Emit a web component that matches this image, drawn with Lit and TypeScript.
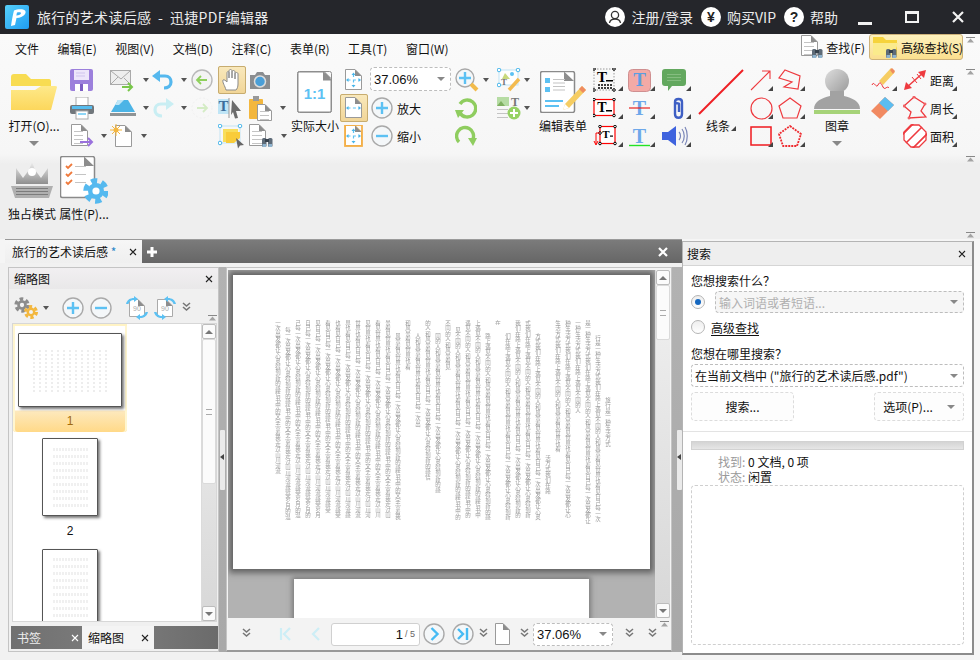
import { LitElement, html, css, svg, nothing } from "lit";
import { customElement } from "lit/decorators.js";

const ic = (w: number, h: number, body: unknown) =>
  html`<svg width=${w} height=${h} viewBox="0 0 ${w} ${h}" style="display:block;flex:none">${body}</svg>`;

const page = (x: number, y: number, w: number, h: number, fill = "#fff", st = "#9a9a9a") => svg`
  <path d="M${x + .5} ${y + .5}H${x + w - 7}L${x + w - .5} ${y + 7}V${y + h - .5}H${x + .5}Z" fill=${fill} stroke=${st}/>
  <path d="M${x + w - 7} ${y + .5}L${x + w - .5} ${y + 7}H${x + w - 7}Z" fill="#8d8d8d"/>`;
const lines = (x: number, y: number, w: number, n: number, step = 4, c = "#c4c4c4") =>
  Array.from({ length: n }, (_, i) => svg`<rect x=${x} y=${y + i * step} width=${w} height="1" fill=${c}/>`);
const binoc = (x: number, y: number) => svg`
  <rect x=${x} y=${y} width="4.5" height="9" rx="1.5" fill="#5e6b78"/><rect x=${x + 6} y=${y} width="4.5" height="9" rx="1.5" fill="#5e6b78"/>
  <rect x=${x + 3} y=${y + 1} width="4" height="3" fill="#36414c"/><rect x=${x + .5} y=${y + 6} width="3.5" height="3" fill="#8fb4cf"/><rect x=${x + 6.5} y=${y + 6} width="3.5" height="3" fill="#8fb4cf"/>`;
const gear = (cx: number, cy: number, r: number, c: string, hole = "#fff") => svg`
  <circle cx=${cx} cy=${cy} r=${r} fill="none" stroke=${c} stroke-width=${r * .55} stroke-dasharray=${`${r * .6} ${r * .45}`}/>
  <circle cx=${cx} cy=${cy} r=${r * .8} fill=${c}/><circle cx=${cx} cy=${cy} r=${r * .36} fill=${hole}/>`;
const circBtn = (inner: unknown, s = 22) => ic(s, s, svg`
  <circle cx=${s / 2} cy=${s / 2} r=${s / 2 - 1} fill="#f4f7f9" stroke="#a9a9a9" stroke-width="1.4"/>${inner}`);
const plus = circBtn(svg`<path d="M11 5v12M5 11h12" stroke="#5cc1f3" stroke-width="2.4"/>`);
const minus = circBtn(svg`<path d="M5 11h12" stroke="#5cc1f3" stroke-width="2.4"/>`);
const dots = (x: number, y: number, w: number, h: number) => svg`
  <rect x=${x} y=${y} width=${w} height=${h} fill="none" stroke="#9a9a9a" stroke-width="1" stroke-dasharray="1.5 1.5"/>`;
const handles = (pts: number[][], c = "#49b6ea", f = "#fff", r = 1.8) =>
  pts.map(([x, y]) => svg`<circle cx=${x} cy=${y} r=${r} fill=${f} stroke=${c} stroke-width="1"/>`);
const crossArrows = svg`<path d="M11 8v12M5 14h12" stroke="#5cc1f3" stroke-width="1.2" stroke-dasharray="3 2.4"/>
  <path d="M9 9l2-2.5L13 9zM9 19l2 2.5 2-2.5zM6 12l-2.5 2L6 16zM16 12l2.5 2L16 16z" fill="#49b6ea"/>`;
const tLetter = (x: number, y: number, s: number, c: string) =>
  svg`<text x=${x} y=${y} font-family="Liberation Serif" font-weight="700" font-size=${s} fill=${c} text-anchor="middle">T</text>`;
const dbl = ic(9, 12, svg`<path d="M1 1l3.5 3L8 1M1 5l3.5 3L8 5" fill="none" stroke="#777" stroke-width="1.6"/>`);
const rot90 = (flip: boolean) => ic(24, 24, svg`
  ${page(4, 3, 16, 18, "#fff", "#aaa")}
  <text x="12" y="15" font-family="Liberation Sans" font-size="7" fill="#aaa" text-anchor="middle">90</text>
  <g transform=${flip ? "translate(24 0) scale(-1 1)" : ""}>
  <path d="M1 8C2 4 5 2 9 2V0l4 3-4 3V4C6 4 4 6 3.500 8Z" fill="#5cc1f3"/>
  <path d="M23 16c-1 4-4 6-8 6v2l-4-3 4-3v2c3 0 5-2 5.500-4Z" fill="#5cc1f3"/></g>`);

const I = {
  logo: ic(24, 24, svg`<defs><linearGradient id="lg" x1="0" y1="0" x2="1" y2="1"><stop offset="0" stop-color="#56d0fb"/><stop offset="1" stop-color="#1f9cf2"/></linearGradient></defs>
    <rect width="24" height="24" rx="2" fill="url(#lg)"/>
    <path d="M6 21C7 14 8 9 9 5.500 12 4 18 3.500 20 5.500 22 8 19 12.500 11.500 13L10 20Z" fill="#fff"/><path d="M12 7.500 11.300 10.500C14 10.500 16 9.500 16 8 16 7 14 7 12 7.500Z" fill="#37aef6"/>`),
  folder: ic(46, 36, svg`<defs><linearGradient id="fo" x1="0" y1="0" x2="0" y2="1"><stop offset="0" stop-color="#fee98a"/><stop offset="1" stop-color="#fcd75c"/></linearGradient></defs>
    <path d="M0 3Q0 0 3 0H15L20 5H38Q40 5 40 8V12H0Z" fill="#f8dc52"/><path d="M0 36Q0 36 3 36H40L46 13Q46 12 44 12H30L24 16H0Z" fill="url(#fo)"/>`),
  save: ic(23, 22, svg`<rect width="23" height="22" rx="2" fill="#9c80dc"/><rect x="4" y="1" width="15" height="10" fill="#ece6fa"/><path d="M6 4h9M6 7h9" stroke="#cfc4ee"/><rect x="5" y="15" width="13" height="7" fill="#fff"/><rect x="10" y="15" width="3" height="7" fill="#7d5fc4"/>`),
  print: ic(24, 23, svg`<rect x="6" y="0" width="12" height="9" fill="#fff" stroke="#aaa"/><rect x="0" y="8" width="24" height="9" rx="2" fill="#71777c"/><rect x="2" y="9" width="20" height="3" fill="#56bcee"/><rect x="6" y="14" width="12" height="8" fill="#fff" stroke="#aaa"/><rect x="8" y="16" width="8" height="2" fill="#8fd6f6"/>`),
  mail: ic(26, 23, svg`<rect x=".5" y="1.500" width="20" height="14" fill="#eee" stroke="#aaa"/><path d="M1 2l10 8 9-8M1 15l7-7M20 15l-6-6" fill="none" stroke="#aaa"/><path d="M12 18h9M18 14l4 4-4 4" fill="none" stroke="#79c74a" stroke-width="2"/>`),
  hat: ic(26, 18, svg`<path d="M8 1H18L25 13H1Z" fill="#4cb4e6"/><path d="M8 1h6l-5 5H5z" fill="#bde6f8"/><rect x="0" y="14" width="26" height="3" fill="#8f9496"/>`),
  exp: ic(24, 24, svg`${page(1, 0, 17, 22, "#fff", "#9a9a9a")}${lines(4, 7, 9, 4)}<path d="M10 18h11M18 14l4 4-4 4" fill="none" stroke="#9a71dd" stroke-width="2"/>`),
  nw: ic(24, 24, svg`${page(5, 1, 17, 22, "#fff", "#9a9a9a")}<circle cx="6" cy="6" r="2.500" fill="#f4b63f"/><path d="M6 0v12M0 6h12M2 2l8 8M10 2l-8 8" stroke="#f4b63f"/>`),
  undo: ic(22, 20, svg`<path d="M7 6H13C17 6 19 9 19 12 19 16 16 18 12 18" fill="none" stroke="#55b8ee" stroke-width="3.200"/><path d="M8 0V12L0 6Z" fill="#55b8ee"/>`),
  redo: ic(22, 20, svg`<path d="M15 6H9C5 6 3 9 3 12 3 16 6 18 10 18" fill="none" stroke="#c9eef3" stroke-width="3.200"/><path d="M14 0V12L22 6Z" fill="#c9eef3"/>`),
  back: ic(22, 22, svg`<circle cx="11" cy="11" r="10" fill="#f3f3f3" stroke="#b9b9b9" stroke-width="1.400"/><path d="M6 11h10M10 7l-4 4 4 4" fill="none" stroke="#8ed05c" stroke-width="1.800"/>`),
  fwd: ic(22, 22, svg`<circle cx="11" cy="11" r="10" fill="none" stroke="#f1f1f1" stroke-dasharray="2 2"/><path d="M6 11h10M12 7l4 4-4 4" fill="none" stroke="#d4ecc5" stroke-width="1.800"/>`),
  hand: ic(20, 22, svg`<path d="M4 21C3 17 0 13 1 11 2 10 4 12 5 13V4C5 2 7 2 7 4V9 2C7 0 10 0 10 2V9 3C10 1 13 1 13 3V10 5C13 3 16 3 16 5V15C16 18 15 20 14 21Z" fill="#fff" stroke="#8a8a8a" stroke-width="1"/>`),
  cam: ic(22, 17, svg`<path d="M1 3H6L8 0H14L16 3H21V17H1Z" fill="#8a8d90"/><circle cx="11" cy="9.500" r="5.500" fill="#4a9fd8" stroke="#dcdcdc" stroke-width="1.500"/>`),
  tsel: ic(25, 24, svg`<rect x="0" y="3" width="11" height="15" fill="#bfe5f6"/>${tLetter(5.500, 15, 15, "#3c6e9a")}<path d="M11 2v20" stroke="#999"/><path d="M14 4l9 11-5 0 2 7-3 .5-2-6.500L13 19Z" fill="#6c6c6c"/>`),
  clip: ic(24, 25, svg`<rect x="0" y="3" width="14" height="20" rx="1" fill="#f3b73e"/><rect x="4" y="0" width="6" height="5" fill="#999"/>${page(8, 8, 15, 17)}${lines(11, 15, 9, 3)}`),
  note: ic(27, 25, svg`<rect x="2" y="2" width="20" height="17" fill="none" stroke="#c3e4f3"/><path d="M5 5H20V13L14 18H5Z" fill="#f8de5c"/><path d="M8 8H22V14L16 19H8Z" fill="#f9cc3a"/>${handles([[2, 2], [22, 2], [2, 19]])}<path d="M18 14l8 7-4 .5-2 3Z" fill="#666"/>`),
  srch: ic(25, 24, svg`${page(0, 0, 17, 22)}${lines(3, 7, 10, 4)}${binoc(13, 14)}`),
  actual: ic(36, 42, svg`${page(.5, .5, 34, 41, "#fff", "#8e8e8e")}<rect x=".5" y=".5" width="34" height="41" rx="2" fill="none" stroke="#8e8e8e"/><path d="M26 .5 35 9.500H26Z" fill="#8d8d8d"/><text x="17.500" y="28" font-family="Liberation Sans" font-weight="700" font-size="15" fill="#5cc1f3" text-anchor="middle">1:1</text>`),
  fit1: ic(20, 22, svg`${page(1, 0, 17, 21)}<g transform="translate(-1.500 -3)">${crossArrows}</g>`),
  fit2: ic(20, 22, svg`${page(1, 0, 17, 21)}<g transform="translate(-1.500 -3)"><path d="M5 14h12" stroke="#5cc1f3" stroke-width="1.200" stroke-dasharray="3 2.400"/><path d="M6 12l-2.500 2L6 16zM16 12l2.500 2L16 16z" fill="#49b6ea"/></g>`),
  fit3: ic(20, 22, svg`${page(1, 0, 17, 21, "#fff", "#f0ab3e")}<rect x="1" y="0" width="17" height="21" fill="none" stroke="#f3b04a" stroke-width="1.800"/><g transform="translate(-1.500 -3)">${crossArrows}</g>`),
  mag: ic(24, 24, svg`<circle cx="10" cy="10" r="9" fill="#f4f7f9" stroke="#a9a9a9" stroke-width="1.400"/><path d="M10 4v12M4 10h12" stroke="#5cc1f3" stroke-width="2.400"/><path d="M16 16l6 6" stroke="#f2bb4b" stroke-width="4"/>`),
  ccw: ic(22, 22, svg`<path d="M5 7A8.500 8.500 0 1 1 5 16" fill="none" stroke="#8fcd5f" stroke-width="3.400"/><path d="M0 13H9L3 21Z" fill="#8fcd5f"/>`),
  cw: ic(22, 22, svg`<path d="M4 17A8.500 8.500 0 1 1 18 14" fill="none" stroke="#8fcd5f" stroke-width="3.400"/><path d="M13 13H22L18 21Z" fill="#8fcd5f"/>`),
  ed1: ic(24, 24, svg`<rect x="2" y="2" width="19" height="15" fill="#fff" stroke="#bfe4f5"/><path d="M8 5l5 6H5Z" fill="#c9d97d"/><circle cx="15" cy="6" r="2" fill="#5cc1f3"/>${tLetter(7, 17, 9, "#777")}<path d="M12 22L22 11" stroke="#f3bb50" stroke-width="3.500"/>${handles([[2, 2], [21, 2], [2, 17]])}`),
  ed2: ic(24, 24, svg`<rect x="0" y="1" width="12" height="9" fill="#b6dca4"/><path d="M0 10l4-5 4 5Z" fill="#7fb061"/>${tLetter(18, 10, 12, "#777")}${lines(0, 13, 11, 3)}<circle cx="17" cy="17" r="6.500" fill="#96d264"/><path d="M17 13v8M13 17h8" stroke="#fff" stroke-width="2"/>`),
  form: ic(46, 42, svg`<rect x=".5" y=".5" width="34" height="41" rx="2" fill="#fff" stroke="#8a8a8a" stroke-width="1.500"/><path d="M24 .5 34 10H24Z" fill="#8d8d8d"/>
    <rect x="5" y="7" width="5" height="5" fill="#5cc1f3"/><rect x="5" y="16" width="5" height="5" fill="#5cc1f3"/><rect x="5" y="29" width="18" height="2" fill="#5cc1f3"/><rect x="5" y="34" width="14" height="2" fill="#5cc1f3"/>${lines(13, 8, 12, 4, 3.500)}
    <path d="M25 33 42 15 46 19 29 37 23 39Z" fill="#f6cd62"/><path d="M39 18 42 15 46 19 43 22Z" fill="#ef8b60"/><path d="M23 39l2-6 4 4Z" fill="#fff"/>`),
  tb1: ic(23, 24, svg`${dots(1, 1, 20, 21)}${tLetter(9, 14, 15, "#000")}<rect x="13" y="12" width="7" height="1.500" fill="#000"/><path d="M5 17h14M5 20h14" stroke="#000" stroke-width="1.300" stroke-dasharray="2 1"/>${handles([[1, 1], [21, 1], [1, 22], [21, 22]], "#000", "#fff", 1.300)}`),
  tb2: ic(23, 20, svg`<rect x="1" y="1.500" width="20" height="16" fill="#fff" stroke="#f00" stroke-width="1.200"/>${tLetter(9, 14, 14, "#000")}<rect x="13" y="12" width="6" height="1.500" fill="#000"/>${handles([[1, 1.500], [21, 1.500], [1, 17.500], [21, 17.500]], "#000", "#fff", 1.300)}`),
  tb3: ic(24, 22, svg`<rect x="7" y="1.500" width="15" height="17" fill="#fff" stroke="#f00" stroke-width="1.200"/>${tLetter(13, 13, 11, "#000")}<rect x="17" y="10.500" width="3" height="1.200" fill="#000"/>${handles([[7, 1.500], [22, 1.500], [7, 18.500], [22, 18.500], [7, 8]], "#000", "#fff", 1.300)}<path d="M7 8H3V19M1 16l2 4 2-4" fill="none" stroke="#f00" stroke-width="1"/>`),
  t1: ic(23, 23, svg`<rect x=".5" y=".5" width="22" height="22" rx="4" fill="#f3aaa6" stroke="#cf8f90"/>${tLetter(11.500, 17, 19, "#5d9ee0")}`),
  t2: ic(23, 24, svg`${tLetter(11.500, 19, 20, "#6ea8ea")}<path d="M1 12h21" stroke="#e8211d" stroke-width="1.200"/>`),
  t3: ic(23, 24, svg`${tLetter(11.500, 19, 20, "#6ea8ea")}<path d="M1 21.500h21" stroke="#24e324" stroke-width="1.400"/>`),
  cmt: ic(24, 22, svg`<path d="M3 0H21Q24 0 24 3V14Q24 17 21 17H10L6 22 6 17H3Q0 17 0 14V3Q0 0 3 0Z" fill="#63a85f"/>${lines(5, 5, 14, 3, 3, "#85bd80")}`),
  pin: ic(13, 24, svg`<path d="M3 16V6C3 2 10 2 10 6V18C10 23 3 23 3 18V8C3 7 7 7 7 8V16" fill="none" stroke="#3e5fc4" stroke-width="2.400"/>`),
  spk: ic(26, 24, svg`<path d="M0 8H6L14 2V22L6 16H0Z" fill="#3f63de"/><path d="M17 8C19 10 19 14 17 16M20 5C23 9 23 15 20 19M23 3C26 8 26 16 23 21" fill="none" stroke="#7a86b8" stroke-width="1.200"/>`),
  line: ic(46, 46, svg`<path d="M1 45L45 1" stroke="#ef1f24" stroke-width="2"/>`),
  arrow: ic(22, 22, svg`<path d="M1 21L20 2M12 2h8v8" fill="none" stroke="#ee3a3f" stroke-width="1.100"/>`),
  ell: ic(23, 23, svg`<circle cx="11.500" cy="11.500" r="10.500" fill="none" stroke="#ee3a3f" stroke-width="1.200"/>`),
  rct: ic(22, 20, svg`<rect x="1" y="1" width="20" height="18" fill="none" stroke="#f01a1f" stroke-width="1.500"/>`),
  poly: ic(23, 22, svg`<path d="M7 1L22 7 20 20 6 18 14 13 1 9Z" fill="none" stroke="#ee3a3f" stroke-width="1.200"/>`),
  pent: ic(24, 22, svg`<path d="M12 1L23 9 19 21H5L1 9Z" fill="none" stroke="#ee3a3f" stroke-width="1.200"/>`),
  cloud: ic(24, 22, svg`<path d="M12 1L23 9 19 21H5L1 9Z" fill="none" stroke="#ee2a2f" stroke-width="1.800" stroke-dasharray="2 1" stroke-linejoin="round"/>`),
  stamp: ic(46, 46, svg`<defs><linearGradient id="st" x1="0" y1="0" x2="1" y2="1"><stop offset="0" stop-color="#dedede"/><stop offset="1" stop-color="#9a9a9a"/></linearGradient></defs>
    <circle cx="23" cy="12" r="12" fill="url(#st)"/><path d="M0 40C0 32 8 29 16 27V22H30V27C38 29 46 32 46 40Z" fill="#a2a2a2"/><rect x="0" y="41" width="46" height="4" fill="#a6d378"/>`),
  pen: ic(24, 26, svg`<path d="M8 14 20 1 24 5 12 18Z" fill="#f6cd62"/><path d="M19 3l2-2 3 3-2 3Z" fill="#ef8b60"/><path d="M1 18C3 13 5 22 7 18S10 16 12 20 16 18 18 21" fill="none" stroke="#ee2a2f" stroke-width="1"/>`),
  erase: ic(23, 22, svg`<path d="M0 14 14 0 23 8 9 22Z" fill="#f18a62"/><path d="M8 6 14 0 23 8 17 14Z" fill="#5cbdf0"/>`),
  dist: ic(24, 22, svg`<path d="M3 19L21 3" stroke="#ee3a3f" stroke-width="1.500"/><path d="M1 21l2-8 6 6ZM23 1l-2 8-6-6Z" fill="#ee3a3f"/><path d="M9 8l5 6M14 5l4 5" stroke="#ee3a3f"/>`),
  peri: ic(24, 24, svg`<path d="M11 1 22 8 18 15 23 21 6 22 8 16 1 10Z" fill="none" stroke="#ee3a3f" stroke-width="1.300"/>${handles([[11, 1], [22, 8], [1, 10], [6, 22]], "#ee3a3f", "#fff", 1)}`),
  area: ic(24, 24, svg`<defs><clipPath id="ar"><path d="M8 0H16L24 8V16L16 24H8L0 16V8Z"/></clipPath></defs><path d="M8 1H16L23 8V16L16 23H8L1 16V8Z" fill="#fff" stroke="#ee3a3f" stroke-width="1.300"/><g clip-path="url(#ar)"><path d="M-2 12L12-2M2 20L20 2M8 26L26 8" stroke="#ee3a3f" stroke-width="1.600"/></g>`),
  crown: ic(42, 40, svg`<defs><linearGradient id="cr" x1="0" y1="0" x2="0" y2="1"><stop offset="0" stop-color="#efefef"/><stop offset="1" stop-color="#8e8e8e"/></linearGradient></defs>
    <path d="M5 8 12 18 18 10 21 2 24 10 30 18 37 8 37 24H5Z" fill="url(#cr)"/><circle cx="21" cy="12" r="4" fill="#fff"/><path d="M0 26H42L38 38H4Z" fill="#b0b0b0"/>${lines(5, 28, 32, 3, 3, "#7c7c7c")}`),
  prop: ic(48, 48, svg`<rect x=".5" y=".5" width="34" height="41" rx="2" fill="#fff" stroke="#8a8a8a" stroke-width="1.500"/><path d="M24 .5 34 10H24Z" fill="#8d8d8d"/>
    <path d="M6 10l2 2 4-4M6 18l2 2 4-4M6 26l2 2 4-4" fill="none" stroke="#ef7a3c" stroke-width="1.800"/>${lines(15, 10, 11, 3, 8)}${gear(36, 35, 10, "#55b9ef")}`),
  find: ic(24, 24, svg`${page(1, 0, 17, 21)}${lines(4, 7, 10, 4)}${binoc(12, 14)}`),
  adv: ic(26, 24, svg`<path d="M0 2H10L13 5H24V20H0Z" fill="#f6d33c"/><path d="M0 8H25L21 20H0Z" fill="#fbeb8c"/>${binoc(13, 14)}`),
  gears: ic(24, 22, svg`${gear(8, 8, 6, "#8c8c8c", "#f3f3f3")}${gear(17, 15, 5.500, "#f3b73e", "#f3f3f3")}`),
  rl: rot90(false), rr: rot90(true),
  doc: ic(15, 22, svg`${page(0, 0, 15, 22)}`),
  first: ic(14, 14, svg`<path d="M2 1v12M11 1 5 7l6 6" fill="none" stroke="#cdeef6" stroke-width="2.200"/>`),
  prev: ic(10, 14, svg`<path d="M8 1 2 7l6 6" fill="none" stroke="#cdeef6" stroke-width="2.200"/>`),
  next: circBtn(svg`<path d="M8.500 5l6 6-6 6" fill="none" stroke="#46bbf4" stroke-width="2.400"/>`),
  last: circBtn(svg`<path d="M6 6l5 5-5 5" fill="none" stroke="#46bbf4" stroke-width="2.400"/><path d="M15 5v12" stroke="#46bbf4" stroke-width="2.400"/>`),
  user: ic(20, 20, svg`<circle cx="10" cy="10" r="10" fill="#fff"/><circle cx="10" cy="8" r="3.600" fill="none" stroke="#333" stroke-width="1.300"/><path d="M4.500 16C5 13 7 12 10 12S15 13 15.500 16" fill="none" stroke="#333" stroke-width="1.300"/>`),
  x: ic(8, 8, svg`<path d="M1 1l6 6M7 1L1 7" stroke="#222" stroke-width="1.100"/>`),
  xw: ic(8, 8, svg`<path d="M1 1l6 6M7 1L1 7" stroke="#fff" stroke-width="1.100"/>`),
  xb: ic(10, 10, svg`<path d="M1 1l8 8M9 1L1 9" stroke="#fff" stroke-width="2.200"/>`),
  xl: ic(12, 12, svg`<path d="M1 1l10 10M11 1L1 11" stroke="#f2f2f2" stroke-width="2.200"/>`),
  add: ic(10, 10, svg`<path d="M5 0v10M0 5h10" stroke="#fff" stroke-width="3"/>`),
  mark: ic(9, 6, svg`<path d="M0 .5h9" stroke="#888"/><path d="M4.500 1.500l3.500 4H1z" fill="#a3a3a3"/>`),
};

const arrow = html`<i class="ar"></i>`;
const cell = (icon: unknown, opts: { a?: boolean; c?: boolean; cls?: string; t?: string } = {}) => html`
  <div class="cell ${opts.cls ?? ""}">${icon}${opts.t ? html`<span>${opts.t}</span>` : nothing}${opts.a ? arrow : nothing}${opts.c ? html`<i class="cor"></i>` : nothing}</div>`;
const col = (cls: string, ...cells: unknown[]) => html`<div class="col ${cls}">${cells}</div>`;
const big = (icon: unknown, label: string, drop = false, corner = false) => html`
  <div class="big"><div class="bi">${icon}</div><div class="bl">${label}${corner ? html`<i class="cor2"></i>` : nothing}</div>${drop ? html`<i class="ar dn"></i>` : nothing}</div>`;

const TEXT = "旅行是一种生活方式我们在路上遇见不同的人和风景看见世界也看见自己每一次出发都让心灵得到新的感悟书中的文字带着我走过山川河流感受岁月的温度与人间的烟火艺术让平凡的日子有了光彩也让远方变得更加清晰而动人";
const COLS: [number, number][] = [
  [395, 555], [210, 775], [165, 780], [165, 455], [165, 775], [165, 570], [570, 690], [205, 770], [165, 770], [165, 770], [205, 770], [165, 180],
  [205, 770], [165, 770], [165, 770], [185, 770], [165, 320], [205, 690], [165, 650], [205, 500], [165, 320], [205, 770], [165, 770], [165, 770],
  [165, 760], [165, 770], [165, 770], [165, 770], [165, 750], [165, 770], [165, 770], [165, 770], [185, 770], [165, 640],
];

@customElement("app-root")
export class AppRoot extends LitElement {
  static styles = css`
    :host { display: block; width: 980px; height: 660px; overflow: hidden; font-family: "Noto Sans CJK SC", "Liberation Sans", sans-serif; font-size: 12px; color: #111; }
    .win { width: 980px; height: 660px; display: flex; flex-direction: column; background: #f5f5f5; }
    .title { height: 34px; flex: none; background: #25262b; display: flex; align-items: center; color: #ececec; padding-left: 5px; box-sizing: border-box; }
    .title .name { margin-left: 8px; font-size: 14px; letter-spacing: .02em; flex: 1; white-space: pre; }
    .tb { display: flex; align-items: center; gap: 6px; font-size: 14px; margin-right: 8px; white-space: nowrap; }
    .tb b { width: 20px; height: 20px; border-radius: 50%; background: #fff; color: #222; font: 700 14px/20px "Liberation Sans", sans-serif; text-align: center; }
    .wc { display: flex; align-items: center; width: 142px; padding-left: 20px; box-sizing: border-box; gap: 33px; margin-left: -8px; flex: none; }
    .wc .mn { width: 14px; height: 3px; background: #f2f2f2; margin-top: 13px; }
    .wc .mx { width: 10px; height: 7px; border: 2px solid #f2f2f2; border-top-width: 3px; }
    .ribbon { height: 205px; flex: none; position: relative; background: linear-gradient(#fafafa 0, #f6f6f6 120px, #eeeeee 130px); box-sizing: border-box; }
    .menu { height: 32px; display: flex; align-items: center; padding: 0 0 4px 15px; box-sizing: border-box; gap: 18.500px; }
    .find { margin-left: auto; display: flex; align-items: center; padding-right: 17px; }
    .find div { display: flex; align-items: center; height: 26px; margin-top: -2px; white-space: nowrap; }
    .find .f1 { gap: 2px; margin-right: 4px; }
    .find .f2 { background: linear-gradient(#fdf1bd, #fbdf8e); border: 1px solid #cdb27a; border-radius: 3px; padding: 0 3px; box-sizing: border-box; width: 94px; gap: 2px; letter-spacing: -.2px; }
    .tools { display: grid; padding-left: 8px; grid-template-rows: 84px; grid-template-columns: 62px 40px 42px 39px 27px 31px 41px 50px 28px 84px 43px 40px 56px 35px 32px 36px 54px 28px 32px 58px 34px 60px; }
    .tools > .big:first-child { width: 52px; }
    .col { display: flex; flex-direction: column; }
    .p2 { padding-left: 2px; } .p3 { padding-left: 3px; } .p4 { padding-left: 4px; } .p5 { padding-left: 5px; }
    .cell { height: 28px; display: flex; align-items: center; gap: 7px; position: relative; white-space: nowrap; }
    .cell.ct { justify-content: center; }
    .cell.sel { width: 28px; background: linear-gradient(#f9e9bd, #f1d597); outline: 1px solid #c7ac6f; outline-offset: -1px; border-radius: 2px; justify-content: center; }
    .cell.sm { width: 28px; }
    .cell.lb3 { gap: 3px; }
    .ar { display: block; width: 0; height: 0; border: 3px solid transparent; border-top: 4px solid #555; border-bottom: 0; flex: none; }
    .ar.dn { border-width: 5px 5px 0; margin-top: 7px; border-top-color: #888; }
    .cor, .cor2 { position: absolute; right: 3px; bottom: 3px; width: 0; height: 0; border-style: solid; border-width: 0 0 5px 5px; border-color: transparent transparent #444 transparent; }
    .cor2 { position: static; display: inline-block; margin-left: 1px; }
    .big { display: flex; flex-direction: column; align-items: center; }
    .bi { height: 52px; display: flex; align-items: center; justify-content: center; }
    .bl { line-height: 16px; white-space: nowrap; }
    .combo { display: flex; align-items: center; justify-content: space-between; box-sizing: border-box; background: #fff; border: 1px dashed #bdbdbd; border-radius: 4px; padding: 0 5px 0 3px; white-space: nowrap; }
    .combo .ar { border-width: 4px 4px 0; border-top-color: #888; }
    .z { width: 81px; height: 24px; margin: 1px 0 3px 2px; font: 13px "Liberation Sans", sans-serif; }
    .zr { gap: 4px; padding-left: 3px; }
    .t2 { display: flex; padding: 0 0 0 8px; margin-top: 6px; gap: 4px; }
    .t2 .big { width: 48px; }
    .t2 .bi { height: 48px; }
    .t2 .bl { margin-top: 2px; }
    .rail { position: absolute; right: 5px; top: 0; bottom: 0; width: 9px; }
    .rail span { position: absolute; left: 0; }
    .m1 { top: 3px; } .m2 { top: 35px; } .m3 { top: 122px; } .m4 { top: 198px; }
    .work { flex: 1; display: flex; min-height: 0; }
    .main { width: 682px; flex: none; display: flex; flex-direction: column; }
    .tabs { height: 24px; flex: none; background: linear-gradient(#7b7b7b, #666); border-top: 1px solid #9a9a9a; box-sizing: border-box; display: flex; align-items: center; margin-left: 5px; padding-right: 14px; }
    .tab { height: 23px; width: 137px; background: linear-gradient(#f6f6f6, #efefef); display: flex; align-items: center; justify-content: space-between; padding: 0 5px 0 7px; box-sizing: border-box; margin-right: 5px; }
    .tab em { font-style: normal; color: #2a86c8; }
    .sp { flex: 1; }
    .panes { flex: 1; display: flex; min-height: 0; padding: 4px 0 8px 8px; background: #f1f1f1; }
    .thumbs { width: 211px; flex: none; display: flex; flex-direction: column; background: #f0f0f0; border: 1px solid #c4c4c4; box-sizing: border-box; }
    .ph { height: 21px; flex: none; display: flex; align-items: center; justify-content: space-between; padding: 0 5px; background: linear-gradient(#f1eff1, #e9e8e9); }
    .tbar { height: 34px; flex: none; display: flex; align-items: center; padding: 3px 0 0 5px; box-sizing: border-box; }
    .tbar .ar { margin: 0 0 0 5px; }
    .tbar .ar + svg { margin-left: 13px; }
    .tbar > svg:nth-of-type(3) { margin-left: 6px; }
    .tbar > svg:nth-of-type(4) { margin-left: 13px; }
    .tbar > svg:nth-of-type(5) { margin-left: 4px; }
    .tbar > svg:nth-of-type(6) { margin-left: 5px; }
    .tbar .mk { margin: 20px 1px 0 auto; }
    .list { flex: 1; display: flex; min-height: 0; margin: 0 1px 0 3px; background: #fff; border: 1px solid #d7d7d7; box-sizing: border-box; position: relative; }
    .lb { flex: 1; overflow: hidden; display: flex; flex-direction: column; align-items: flex-start; }
    .item { width: 114px; display: flex; flex-direction: column; align-items: center; }
    .item.on { background: linear-gradient(#fff 0, #fff 86px, #fde9bd 87px, #ffd988 100%); border-radius: 0 0 3px 3px; box-shadow: inset 0 2px 0 #fff3c4, inset 2px 0 0 #fff6d0, inset -2px 0 0 #fff6d0; height: 108px; padding-top: 9px; box-sizing: border-box; }
    .item label { font: 12px/14px "Liberation Sans", sans-serif; margin-top: 8px; }
    .item.on label { color: #a06a10; margin-top: 7px; }
    .tp { background: #fff; border: 1px solid #555; border-radius: 1px; box-shadow: 2px 2px 3px #777; box-sizing: border-box; display: flex; flex: none; }
    .tp.l { width: 104px; height: 74px; padding: 15px 14px 12px; }
    .tp.p { width: 56px; height: 78px; margin-top: 6px; padding: 8px 9px; }
    .tp.c { height: 84px; margin-top: 11px; margin-bottom: -20px; }
    .tp div { flex: 1; }
    .tp.l div { background: repeating-linear-gradient(0deg, #fff 0 2px, transparent 2px 4px), repeating-linear-gradient(90deg, #ededed 0 2px, transparent 2px 6px); }
    .tp.p div { background: repeating-linear-gradient(90deg, #fff 0 1px, transparent 1px 3px), repeating-linear-gradient(0deg, #f0f0f0 0 3px, transparent 3px 7px); }
    .sb { width: 15px; flex: none; display: flex; flex-direction: column; background: linear-gradient(#f1f1f1, #d7d7d7); border-left: 1px solid #dbdbdb; box-sizing: border-box; }
    .sb .btn { height: 15px; flex: none; background: #fbfbfb; border: 1px solid #bcbcbc; border-radius: 2px; box-sizing: border-box; display: flex; align-items: center; justify-content: center; }
    .sb .btn i { width: 0; height: 0; border: 4px solid transparent; border-top: 0; border-bottom: 4px solid #777; }
    .sb .btn.dn i { border-bottom: 0; border-top: 4px solid #777; }
    .sb .th { flex: none; background: #fbfbfb; border: 1px solid #dadada; border-radius: 2px; display: flex; align-items: center; justify-content: center; box-sizing: border-box; }
    .sb .th::after { content: ""; width: 6px; height: 4px; border-top: 1px solid #aaa; border-bottom: 1px solid #aaa; }
    .sb .gr { flex: 1; }
    .btabs { height: 23px; flex: none; margin: 4px 0 2px 2px; background: linear-gradient(90deg,#707070,#7d7d7d 50%,#6b6b6b); display: flex; }
    .bt { width: 71px; display: flex; align-items: center; justify-content: space-between; box-sizing: border-box; padding: 0 3px 0 6px; color: #eee; font-size: 12px; }
    .bt.on { width: 72px; background: #f4f4f4; color: #111; padding-right: 5px; }
    .split { width: 7px; flex: none; background: linear-gradient(#b2b2b2,#a8a8a8); display: flex; align-items: center; justify-content: center; position: relative; }
    .split::after { content: ""; width: 5px; height: 60px; background: #eaeaea; border-radius: 1px; }
    .split i { position: absolute; left: 1px; top: 187px; width: 0; height: 0; border: 3px solid transparent; border-left: 0; border-right: 4px solid #444; z-index: 1; }
    .doc { width: 446px; flex: none; display: flex; flex-direction: column; background: #f3f3f3; border: 1px solid #c4c4c4; border-bottom-width: 2px; border-bottom-color: #999; box-sizing: border-box; }
    .vr { flex: 1; display: flex; min-height: 0; padding: 2px 3px 0 1px; }
    .view { width: 427px; flex: none; background: #b2b2b2; display: flex; flex-direction: column; align-items: center; overflow: hidden; gap: 10px; padding-top: 5px; box-sizing: border-box; }
    .pg { flex: none; background: #fff; box-sizing: border-box; }
    .pg.a { width: 417px; height: 294px; box-shadow: 0 0 6px 4px #636363; padding: 45px 0 0 40px; }
    .pg.b { width: 295px; height: 60px; box-shadow: 0 0 5px 2px #7c7c7c; }
    .txt { display: flex; flex-direction: row-reverse; width: 340px; justify-content: flex-start; filter: blur(.35px); }
    .txt div { writing-mode: vertical-rl; width: 10px; font-size: 5.500px; line-height: 10px; color: #9a9a9a; overflow: hidden; flex: none; white-space: nowrap; }
    .nav { height: 32px; flex: none; display: grid; grid-template-columns: 39px 40px 20px 94px 28px 30px 10px 28px 16px 82px 30px 16px 9px; align-items: center; justify-items: center; }
    .nav .mk { align-self: start; margin-top: 3px; }
    .pin { justify-self: end; width: 89px; height: 23px; display: flex; align-items: center; justify-content: flex-end; gap: 2px; background: #fff; border: 1px solid #d0d0d0; border-radius: 3px; box-sizing: border-box; padding-right: 4px; font: 13px "Liberation Sans", sans-serif; }
    .pin small { font-size: 9px; color: #666; }
    .nz { width: 80px; height: 23px; font: 13px "Liberation Sans", sans-serif; }
    .split.r { width: 10px; }
    .split.r::after { margin-left: 4px; }
    .split.r i { left: 5px; top: 187px; }
    .search { width: 292px; flex: none; margin-top: 2px; margin-bottom: 5px; background: #fff; border: 1px solid #b4b4b4; border-right: 2px solid #8c8c8c; border-bottom: 2px solid #8c8c8c; box-sizing: border-box; display: flex; flex-direction: column; }
    .sh { height: 23px; flex: none; background: #eeeeee; display: flex; align-items: center; justify-content: space-between; padding: 0 6px 0 4px; border-bottom: 1px solid #d5d5d5; }
    .sc { padding: 7px 8px 0; display: flex; flex-direction: column; }
    .sc .l { line-height: 16px; height: 16px; }
    .rw { display: flex; align-items: center; }
    .radio { width: 14px; height: 14px; border-radius: 50%; border: 1px solid #b5b5b5; background: linear-gradient(#eee,#fff); box-sizing: border-box; flex: none; display: flex; align-items: center; justify-content: center; }
    .radio i { width: 6px; height: 6px; border-radius: 50%; background: #1668c0; }
    .r1 { margin-top: 2px; gap: 10px; }
    .r1 .combo { flex: 1; height: 22px; color: #b0b0b0; background: #f6f6f6; }
    .r2 { margin-top: 4px; height: 20px; gap: 6px; }
    .r2 u { text-underline-offset: 2px; }
    .c2 { margin-top: 2px; height: 23px; }
    .l2 { margin-top: 9px; }
    .btns { margin-top: 5px; display: flex; justify-content: space-between; }
    .bn { height: 29px; box-sizing: border-box; border: 1px dashed #dcdcdc; border-radius: 4px; background: #fdfdfd; display: flex; align-items: center; justify-content: center; gap: 14px; }
    .bn.a { width: 103px; } .bn.b { width: 90px; }
    .bn .ar { border-width: 4px 4px 0; border-top-color: #888; }
    .hr { height: 1px; background: #e3e3e3; margin: 10px -8px 0; }
    .pr { height: 9px; margin-top: 9px; background: linear-gradient(#d4d4d4, #e6e6e6); border: 1px solid #d2d2d2; box-sizing: border-box; }
    .st { margin: 4px 0 0 27px; font-size: 12px; }
    .st div { height: 15px; line-height: 15px; }
    .st span { color: #9a9a9a; }
    .res { height: 160px; margin-top: 1px; border: 1px dashed #cfcfcf; border-radius: 4px; box-sizing: border-box; }
    .edge { flex: 1; background: #f6f6f6; }
  `;

  render() {
    return html`<div class="win">
      <header class="title">
        ${I.logo}
        <div class="name">旅行的艺术读后感  -  迅捷PDF编辑器</div>
        <div class="tb">${I.user}<span>注册/登录</span></div>
        <div class="tb"><b>¥</b><span>购买VIP</span></div>
        <div class="tb"><b>?</b><span>帮助</span></div>
        <div class="wc"><i class="mn"></i><i class="mx"></i>${I.xl}</div>
      </header>
      <section class="ribbon">
        <nav class="menu">
          ${["文件", "编辑(E)", "视图(V)", "文档(D)", "注释(C)", "表单(R)", "工具(T)", "窗口(W)"].map((m) => html`<span>${m}</span>`)}
          <div class="find"><div class="f1">${I.find}<span>查找(F)</span></div><div class="f2">${I.adv}<span>高级查找(S)</span></div></div>
        </nav>
        <div class="tools">
          ${big(I.folder, "打开(O)...", true)}
          ${col("", cell(I.save), cell(I.print), cell(I.exp, { a: true }))}
          ${col("", cell(I.mail, { a: true }), cell(I.hat, { a: true }), cell(I.nw, { a: true }))}
          ${col("", cell(I.undo, { a: true }), cell(I.redo, { a: true }))}
          ${col("", cell(I.back), cell(I.fwd))}
          ${col("", cell(I.hand, { cls: "sel" }), cell(I.tsel, { cls: "sm" }), cell(I.note, { cls: "sm" }))}
          ${col("", cell(I.cam), cell(I.clip, { a: true }), cell(I.srch, { a: true }))}
          ${big(I.actual, "实际大小")}
          ${col("", cell(I.fit1, { cls: "ct" }), cell(I.fit2, { cls: "sel" }), cell(I.fit3, { cls: "ct" }))}
          ${col("", html`<div class="combo z">37.06%<i class="ar"></i></div>`, cell(plus, { t: "放大", cls: "zr" }), cell(minus, { t: "缩小", cls: "zr" }))}
          ${col("", cell(I.mag, { a: true, cls: "zr" }), cell(I.ccw, { cls: "zr" }), cell(I.cw, { cls: "zr" }))}
          ${col("p2", cell(I.ed1, { a: true, cls: "lb3" }), cell(I.ed2, { a: true, cls: "lb3" }))}
          ${big(I.form, "编辑表单")}
          ${col("p2", cell(I.tb1, { c: true }), cell(I.tb2, { c: true }), cell(I.tb3, { c: true }))}
          ${col("p2", cell(I.t1, { c: true }), cell(I.t2, { c: true }), cell(I.t3, { c: true }))}
          ${col("p4", cell(I.cmt, { c: true }), cell(I.pin, { c: true, cls: "ct" }), cell(I.spk, { c: true }))}
          ${big(I.line, "线条", false, true)}
          ${col("p2", cell(I.arrow, { c: true }), cell(I.ell, { c: true }), cell(I.rct, { c: true }))}
          ${col("p2", cell(I.poly, { c: true }), cell(I.pent, { c: true }), cell(I.cloud, { c: true }))}
          ${big(I.stamp, "图章", true)}
          ${col("p5", cell(I.pen, { c: true }), cell(I.erase))}
          ${col("p3", cell(I.dist, { t: "距离", c: true, cls: "lb3" }), cell(I.peri, { t: "周长", c: true, cls: "lb3" }), cell(I.area, { t: "面积", c: true, cls: "lb3" }))}
        </div>
        <div class="t2">${big(I.crown, "独占模式")}${big(I.prop, "属性(P)...")}</div>
        <div class="rail">${[1, 2, 3, 4].map((n) => html`<span class="m${n}">${I.mark}</span>`)}</div>
      </section>
      <div class="work">
        <div class="main">
          <div class="tabs">
            <div class="tab"><span>旅行的艺术读后感 <em>*</em></span>${I.x}</div>
            ${I.add}<div class="sp"></div>${I.xb}
          </div>
          <div class="panes">
            <aside class="thumbs">
              <div class="ph"><span>缩略图</span>${I.x}</div>
              <div class="tbar">${I.gears}${arrow}${plus}${minus}${I.rl}${I.rr}${dbl}<span class="mk">${I.mark}</span></div>
              <div class="list">
                <div class="lb">
                  <div class="item on"><div class="tp l"><div></div></div><label>1</label></div>
                  <div class="item"><div class="tp p"><div></div></div><label>2</label></div>
                  <div class="item"><div class="tp p c"><div></div></div></div>
                </div>
                <div class="sb"><div class="btn"><i></i></div><div class="th" style="height:145px"></div><div class="gr"></div><div class="btn dn"><i></i></div></div>
              </div>
              <div class="btabs"><div class="bt"><span>书签</span>${I.xw}</div><div class="bt on"><span>缩略图</span>${I.x}</div></div>
            </aside>
            <div class="split"><i></i></div>
            <main class="doc">
              <div class="vr">
                <div class="view">
                  <div class="pg a"><div class="txt">${COLS.map(([t, b], i) => {
                    const h = (b - t) / 3;
                    const n = Math.max(1, Math.floor(h / 5.5));
                    const s = i % 40;
                    return html`<div style="margin-top:${(t - 165) / 3}px;height:${h}px">${(TEXT + TEXT).slice(s, s + n)}</div>`;
                  })}</div></div>
                  <div class="pg b"></div>
                </div>
                <div class="sb"><div class="btn"><i></i></div><div class="th" style="height:55px"></div><div class="gr"></div><div class="btn dn"><i></i></div></div>
              </div>
              <div class="nav">
                ${dbl}${I.first}${I.prev}
                <div class="pin">1 <small>/ 5</small></div>
                ${I.next}${I.last}${dbl}${I.doc}${dbl}
                <div class="combo nz">37.06%<i class="ar"></i></div>
                ${dbl}${dbl}<span class="mk">${I.mark}</span>
              </div>
            </main>
            <div class="split r"><i></i></div>
          </div>
        </div>
        <aside class="search">
          <div class="sh"><span>搜索</span>${I.x}</div>
          <div class="sc">
            <div class="l">您想搜索什么？</div>
            <div class="rw r1"><span class="radio"><i></i></span><div class="combo">输入词语或者短语...<i class="ar"></i></div></div>
            <div class="rw r2"><span class="radio"></span><u>高级查找</u></div>
            <div class="l l2">您想在哪里搜索？</div>
            <div class="combo c2">在当前文档中 ("旅行的艺术读后感.pdf")<i class="ar"></i></div>
            <div class="btns"><div class="bn a">搜索...</div><div class="bn b">选项(P)...<i class="ar"></i></div></div>
            <div class="hr"></div>
            <div class="pr"></div>
            <div class="st"><div><span>找到:</span> 0 文档, 0 项</div><div><span>状态:</span> 闲置</div></div>
            <div class="res"></div>
          </div>
        </aside>
        <div class="edge"></div>
      </div>
    </div>`;
  }
}
